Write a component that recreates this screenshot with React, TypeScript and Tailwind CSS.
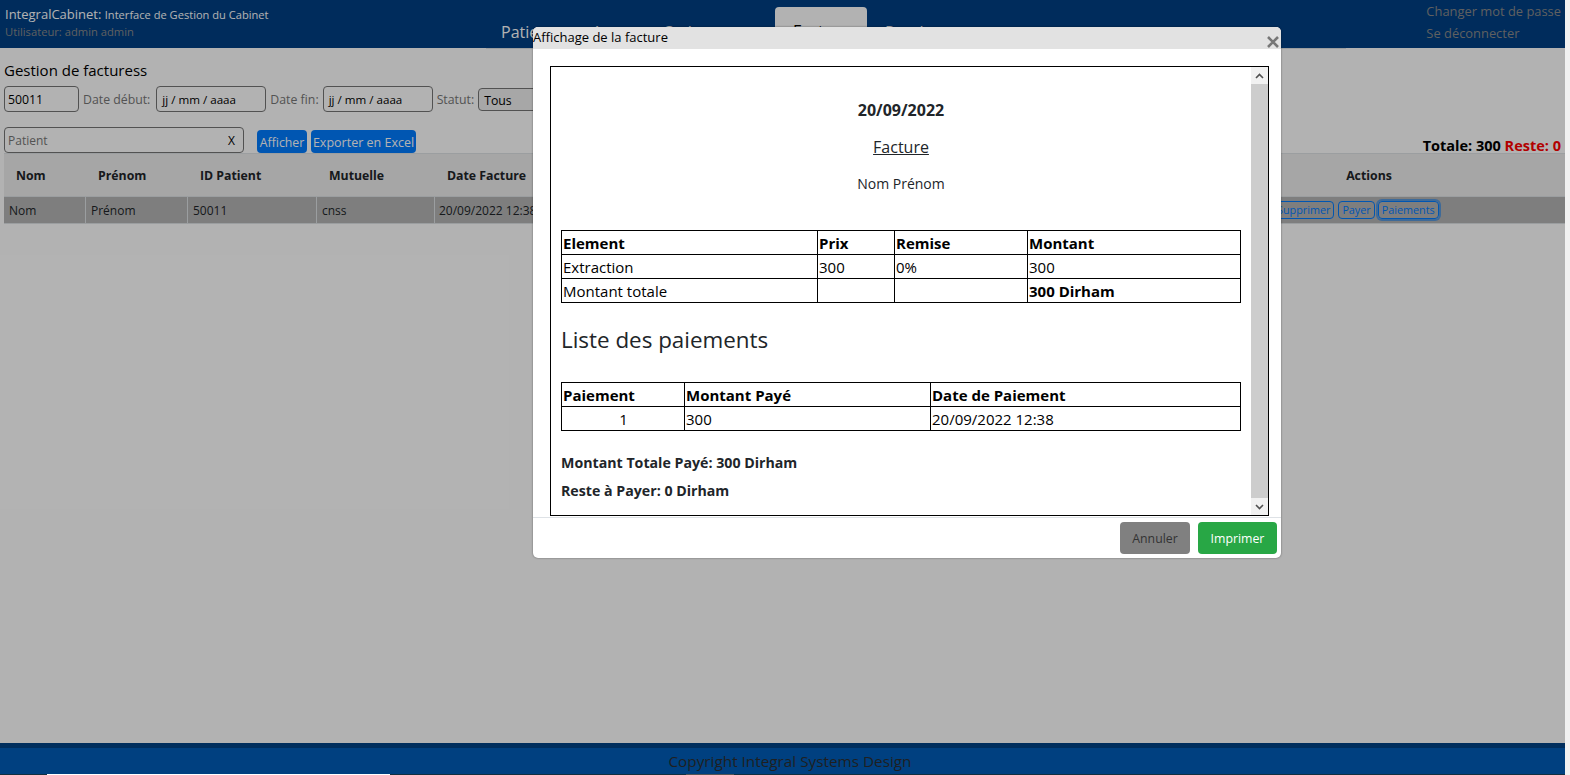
const font = "font-['Open_Sans','Noto_Sans',sans-serif]"

const columns = [
  { label: "Nom", width: "w-[82px]" },
  { label: "Prénom", width: "w-[102px]" },
  { label: "ID Patient", width: "w-[129px]" },
  { label: "Mutuelle", width: "w-[118px]" },
  { label: "Date Facture", width: "w-[102px]" },
]

const rowCells = [
  { label: "Nom", width: "w-[82px]" },
  { label: "Prénom", width: "w-[102px]" },
  { label: "50011", width: "w-[129px]" },
  { label: "cnss", width: "w-[118px]" },
]

function PageHeader() {
  return (
    <header className="h-12 bg-[#004085] flex relative">
      <div className="w-[486px] pl-[5px] pt-[4px] shrink-0">
        <div className="text-[13px] leading-[20px] text-white whitespace-nowrap">
          IntegralCabinet: <span className="text-[11.1px]">Interface de Gestion du Cabinet</span>
        </div>
        <div className="text-[11.2px] leading-[14px] text-[#8a8a8a]">Utilisateur: admin admin</div>
      </div>
      <nav className="w-[860px] h-[49px] flex items-end border-b border-[#dee2e6] text-white text-[16px] leading-6 shrink-0">
        <span className="w-[106px] pl-[15px] pb-[4px]">Patients</span>
        <span className="w-[71px] pb-[4px]">Actes</span>
        <span className="w-[112px] pb-[4px]">Ordonnances</span>
        <span className="w-[92px] h-[41px] bg-white rounded-t text-center pt-[12px] text-black">Facture</span>
        <span className="pl-[18px] pb-[4px]">Rendez-vous</span>
      </nav>
      <div className="ml-auto mr-[4px] text-[12.9px] leading-[22px] text-[#8a8a8a] whitespace-nowrap">
        <div>Changer mot de passe</div>
        <div>Se déconnecter</div>
      </div>
    </header>
  )
}

function Filters() {
  return (
    <div className="px-1">
      <h1 className="text-[15px] leading-[20px] text-black pt-[12px]">Gestion de facturess</h1>
      <div className="flex items-center gap-[4px] mt-[6px] text-[12.3px] text-[#777]">
        <div className="w-[75px] h-[26px] border border-[#767676] rounded-sm pl-[3px] leading-[26px] text-black">50011</div>
        <span className="pr-[2px] pt-[3px]">Date début:</span>
        <div className="w-[110px] h-[26px] border border-[#767676] rounded-sm pl-[5px] leading-[26px] text-[11.6px] text-black">jj / mm / aaaa</div>
        <span className="pt-[3px]">Date fin:</span>
        <div className="w-[110px] h-[26px] border border-[#767676] rounded-sm pl-[5px] leading-[26px] text-[11.6px] text-black">jj / mm / aaaa</div>
        <span className="pt-[3px]">Statut:</span>
        <div className="w-[100px] h-[23px] border border-[#767676] bg-[#efefef] rounded pl-[5px] leading-[23px] text-black">Tous</div>
      </div>
      <div className="flex mt-[15px] h-[26px]">
        <div className="w-[240px] h-[26px] border border-[#767676] rounded-sm pl-[3px] pr-[8px] pt-px flex items-center justify-between text-[12px] text-[#777]">
          <span>Patient</span>
          <span className="text-black">X</span>
        </div>
        <button className="ml-[13px] mt-[3px] pt-[3px] h-[23px] w-[50px] bg-[#007bff] rounded text-white text-[12.3px]">Afficher</button>
        <button className="ml-[4px] mt-[3px] pt-[3px] h-[23px] w-[105px] bg-[#007bff] rounded text-white text-[12.5px] whitespace-nowrap">Exporter en Excel</button>
        <div className="ml-auto mt-[9px] text-[14.5px] leading-[20px] font-bold text-black">
          Totale: 300 <span className="text-[#ff0000]">Reste: 0</span>
        </div>
      </div>
    </div>
  )
}

function FacturesTable() {
  return (
    <div className="ml-1">
      <div className="h-[44px] pt-[3px] bg-[#eeeeee] border-t border-b border-[#dee2e6] flex items-center text-[12.3px] font-bold text-[#212529]">
        {columns.map((c) => (
          <div key={c.label} className={`${c.width} pl-[12px] shrink-0 whitespace-nowrap`}>{c.label}</div>
        ))}
        <div className="ml-[762px] w-[140px] text-center">Actions</div>
      </div>
      <div className="h-[27px] bg-[#b5b5b5] border-b border-[#dee2e6] flex text-[12px] leading-[27px] text-[#212529]">
        {rowCells.map((c) => (
          <div key={c.label} className={`${c.width} pl-[5px] border-r border-[#dee2e6] shrink-0`}>{c.label}</div>
        ))}
        <div className="w-[102px] pl-[4px] whitespace-nowrap overflow-hidden shrink-0">20/09/2022 12:38</div>
        <div className="ml-[736px] flex items-center gap-[4px] text-[10.8px] text-[#007bff]">
          <span className="h-[18px] leading-[16px] px-[3px] border border-[#007bff] rounded">Supprimer</span>
          <span className="h-[18px] leading-[16px] px-[3px] border border-[#007bff] rounded">Payer</span>
          <span className="-ml-px h-[18px] leading-[16px] px-[3px] border border-[#007bff] rounded shadow-[0_0_0_2px_rgba(0,123,255,0.5)]">Paiements</span>
        </div>
      </div>
    </div>
  )
}

function Cell({ className = "", children }: { className?: string; children?: React.ReactNode }) {
  return <td className={`border border-black pl-px pt-px h-6 leading-[22px] ${className}`}>{children}</td>
}

function InvoiceModal() {
  return (
    <div className="absolute left-[533px] top-[27px] w-[748px] h-[531px] bg-white rounded-[5px] shadow-[0_0_2px_rgba(0,0,0,0.5)] flex flex-col overflow-hidden">
      <div className="h-[22px] bg-[#e2e2e2] flex items-center justify-between shrink-0">
        <span className="text-[13px] text-black">Affichage de la facture</span>
        <svg className="mr-[2px] mt-[7px]" width="12" height="12" viewBox="0 0 12 12" fill="none" stroke="#777" strokeWidth="2.6">
          <path d="M1 1l10 10M11 1L1 11" />
        </svg>
      </div>
      <div className="ml-[17px] mr-[12px] mt-[17px] h-[450px] border border-black flex shrink-0 text-[#212529]">
        <div className="flex-1 min-w-0 px-[10px] text-[15px]">
          <div className="text-center text-[16px] font-bold pt-[31px] leading-[24px]">20/09/2022</div>
          <div className="text-center text-[16px] underline mt-[13px] leading-[24px]">Facture</div>
          <div className="text-center text-[14px] mt-[13px] leading-[24px]">Nom Prénom</div>
          <table className="mt-[34px] w-[680px] border-collapse text-black table-fixed">
            <tbody>
              <tr className="font-bold">
                <Cell className="w-[256px]">Element</Cell>
                <Cell className="w-[77px]">Prix</Cell>
                <Cell className="w-[133px]">Remise</Cell>
                <Cell>Montant</Cell>
              </tr>
              <tr>
                <Cell>Extraction</Cell>
                <Cell>300</Cell>
                <Cell>0%</Cell>
                <Cell>300</Cell>
              </tr>
              <tr>
                <Cell>Montant totale</Cell>
                <Cell />
                <Cell />
                <Cell className="font-bold">300 Dirham</Cell>
              </tr>
            </tbody>
          </table>
          <h2 className="text-[22.4px] leading-[30px] mt-[22px]">Liste des paiements</h2>
          <table className="mt-[27px] w-[680px] border-collapse text-black table-fixed">
            <tbody>
              <tr className="font-bold">
                <Cell className="w-[123px]">Paiement</Cell>
                <Cell className="w-[246px]">Montant Payé</Cell>
                <Cell>Date de Paiement</Cell>
              </tr>
              <tr>
                <Cell className="text-center">1</Cell>
                <Cell>300</Cell>
                <Cell>20/09/2022 12:38</Cell>
              </tr>
            </tbody>
          </table>
          <div className="font-bold text-[14.2px] leading-[20px] mt-[22px]">Montant Totale Payé: 300 Dirham</div>
          <div className="font-bold text-[14.2px] leading-[20px] mt-[8px]">Reste à Payer: 0 Dirham</div>
        </div>
        <div className="w-[17px] bg-[#cdcdcd] flex flex-col justify-between shrink-0">
          <div className="h-[17px] bg-[#f1f1f1] flex items-center justify-center">
            <svg width="9" height="6" viewBox="0 0 9 6" fill="none" stroke="#505050" strokeWidth="1.6"><path d="M1 5l3.5-3.5L8 5" /></svg>
          </div>
          <div className="h-[17px] bg-[#f1f1f1] flex items-center justify-center">
            <svg width="9" height="6" viewBox="0 0 9 6" fill="none" stroke="#505050" strokeWidth="1.6"><path d="M1 1l3.5 3.5L8 1" /></svg>
          </div>
        </div>
      </div>
      <div className="mt-[1px] border-t border-[#dee2e6] flex justify-end gap-2 pt-[4px] pr-[4px]">
        <button className="w-[70px] h-8 pt-[2px] bg-[#808080] rounded text-[12.3px] text-[#333]">Annuler</button>
        <button className="w-[79px] h-8 pt-[2px] bg-[#28a745] rounded text-[12.3px] text-white">Imprimer</button>
      </div>
    </div>
  )
}

export default function App() {
  return (
    <div className={`${font} relative h-[775px] w-full overflow-hidden bg-white`}>
      <div className="w-[1565px] h-full flex flex-col">
        <PageHeader />
        <Filters />
        <FacturesTable />
        <div className="flex-1" />
      </div>
      <div className="absolute inset-0 bg-black/30" />
      <div className="absolute left-0 w-[1565px] bottom-0 h-[32px] flex flex-col">
        <div className="h-[7px] bg-[#002e5d]" />
        <div className="flex-1 bg-[#004080] text-center text-[15.3px] leading-[26px] text-[#1f1f1f]">
          <span className="pl-[15px]">Copyright Integral Systems Design</span>
        </div>
        <div className="h-[2px] bg-[#123040] flex">
          <div className="ml-[47px] w-[343px] bg-white" />
          <div className="ml-[296px] w-[48px] bg-[#555]" />
        </div>
      </div>
      <div className="absolute right-0 top-0 bottom-0 w-[5px] bg-[#f1f1f1]" />
      <InvoiceModal />
    </div>
  )
}
